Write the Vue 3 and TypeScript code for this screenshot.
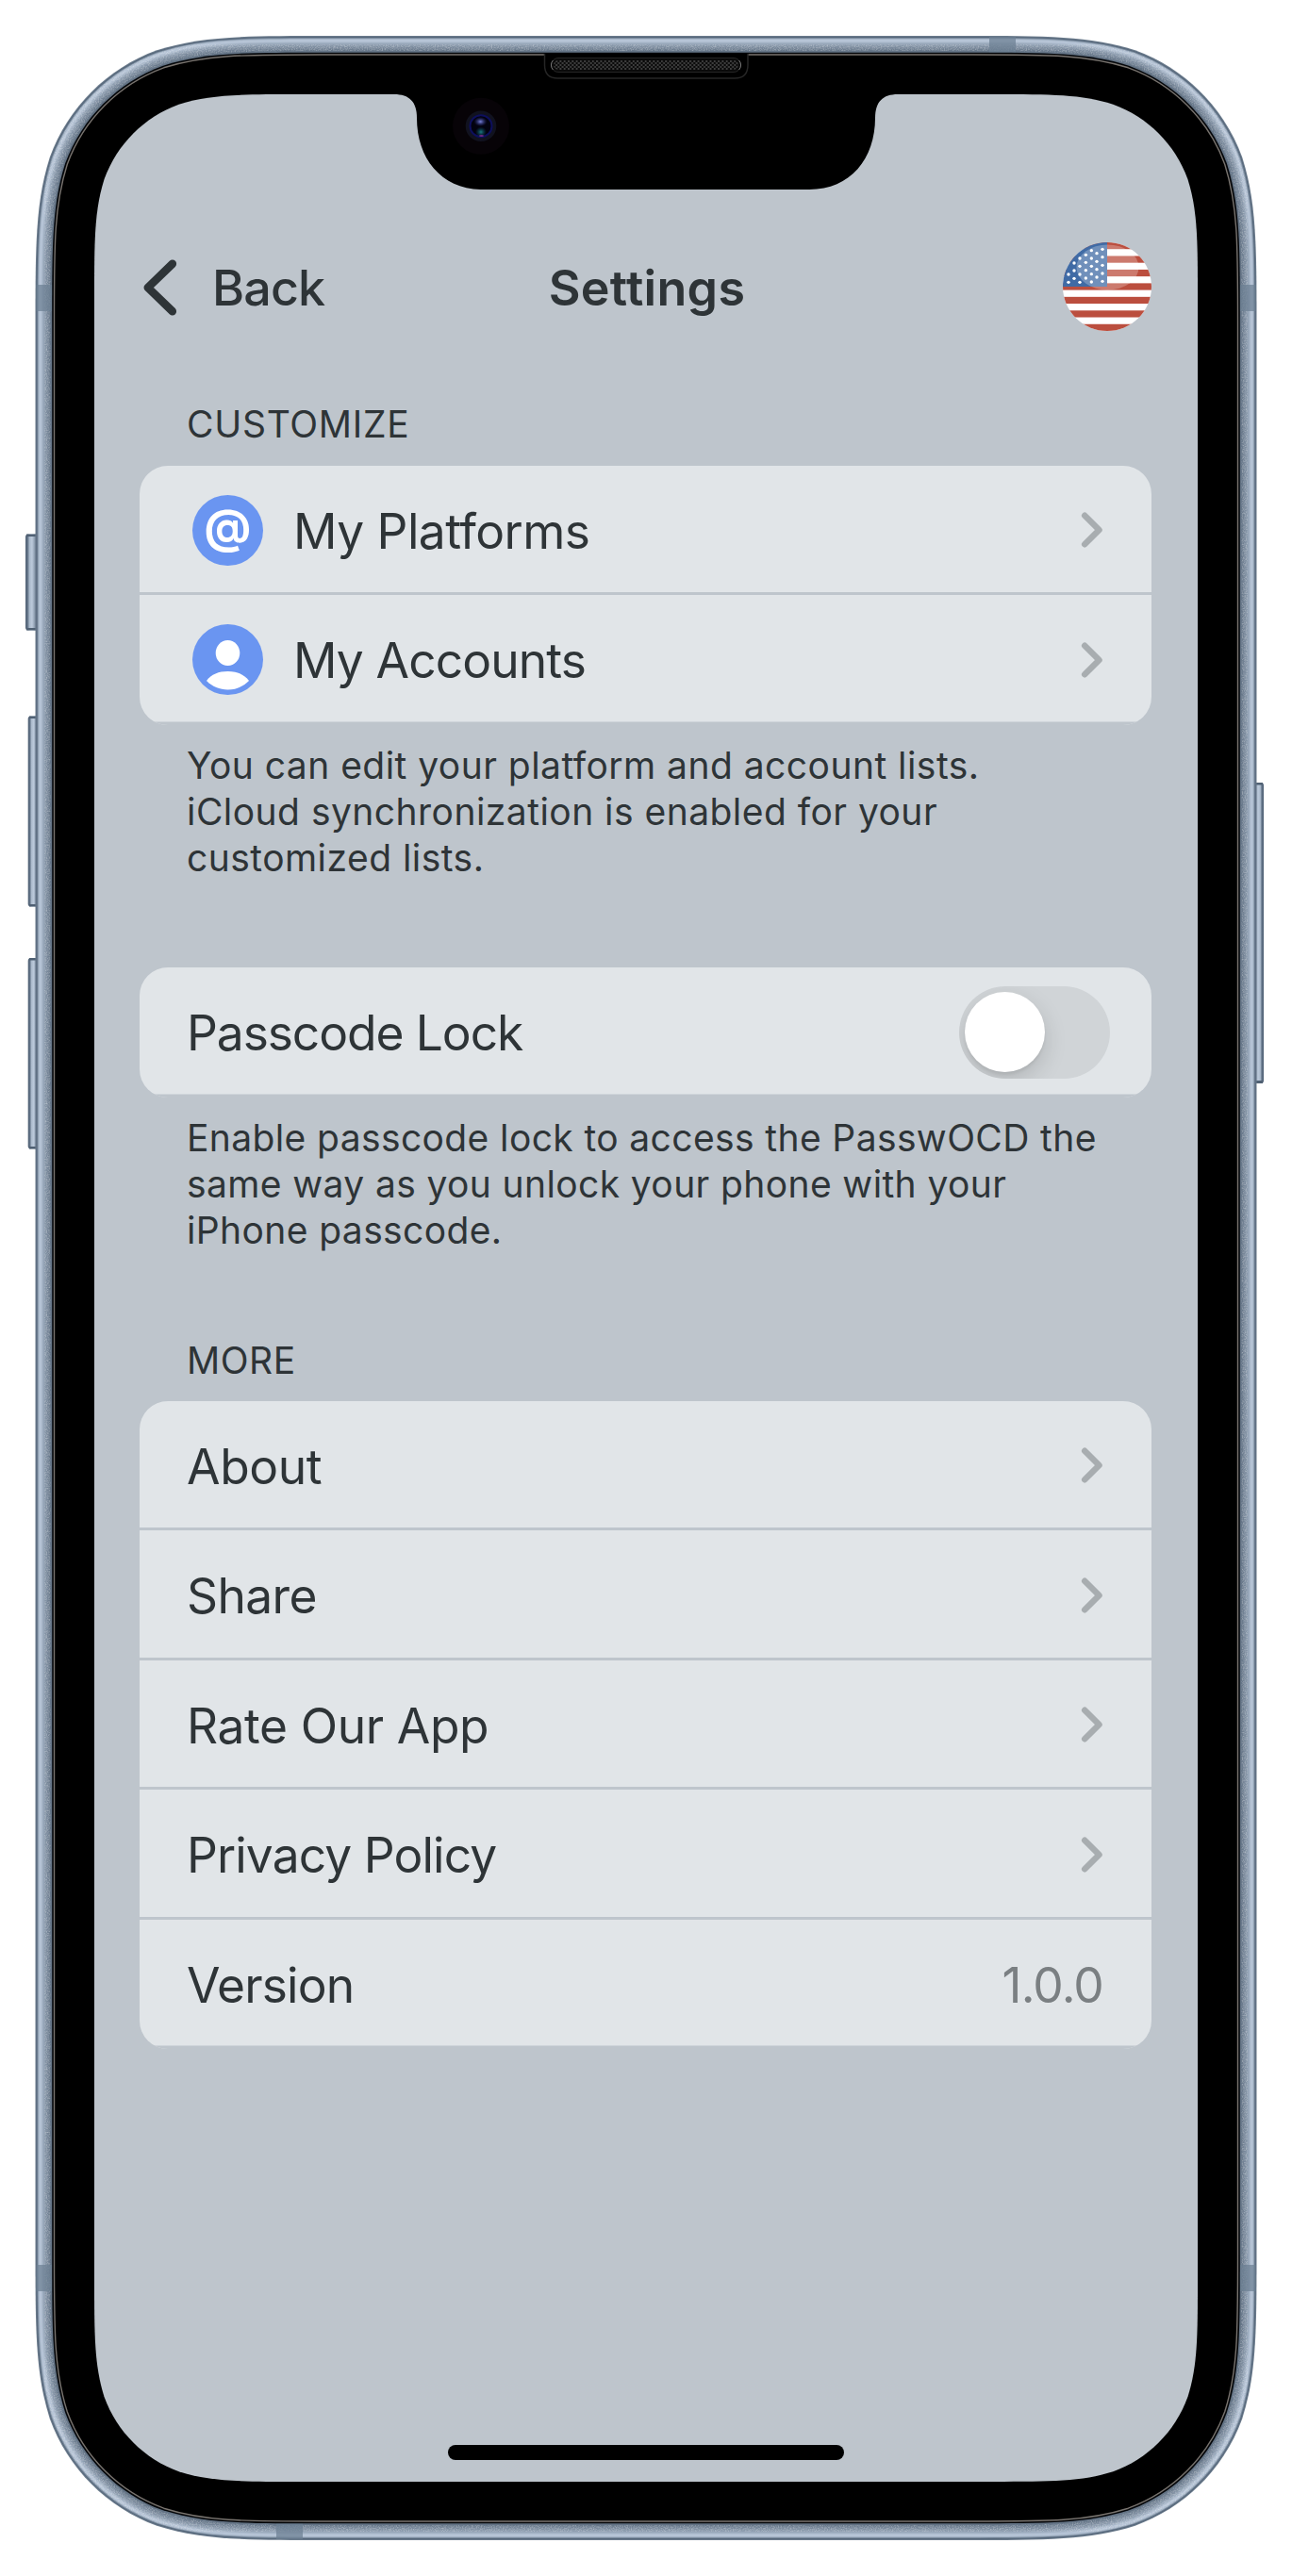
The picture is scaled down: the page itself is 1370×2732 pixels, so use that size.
<script setup lang="ts">
interface Row {
  label: string
  tracking: number
  icon?: 'at' | 'person'
  value?: string
}

const customize: Row[] = [
  { label: 'My Platforms', icon: 'at', tracking: -0.55 },
  { label: 'My Accounts', icon: 'person', tracking: -0.9 },
]
const more: Row[] = [
  { label: 'About', tracking: -0.4 },
  { label: 'Share', tracking: -0.6 },
  { label: 'Rate Our App', tracking: -0.4 },
  { label: 'Privacy Policy', tracking: -0.9 },
  { label: 'Version', value: '1.0.0', tracking: -0.85 },
]

/* Rounded rectangle with continuous-curvature corners. */
function squircle(x: number, y: number, w: number, h: number, r: number): string {
  const a = 1.528665 * r, b = 1.08849296 * r, c = 0.86840694 * r
  const d = 0.63149379 * r, e = 0.07491139 * r, f = 0.37282383 * r, g = 0.16905956 * r
  const X = x + w, Y = y + h
  return [
    `M${x + a} ${y}H${X - a}`,
    `C${X - b} ${y} ${X - c} ${y} ${X - d} ${y + e}`,
    `C${X - f} ${y + g} ${X - g} ${y + f} ${X - e} ${y + d}`,
    `C${X} ${y + c} ${X} ${y + b} ${X} ${y + a}V${Y - a}`,
    `C${X} ${Y - b} ${X} ${Y - c} ${X - e} ${Y - d}`,
    `C${X - g} ${Y - f} ${X - f} ${Y - g} ${X - d} ${Y - e}`,
    `C${X - c} ${Y} ${X - b} ${Y} ${X - a} ${Y}H${x + a}`,
    `C${x + b} ${Y} ${x + c} ${Y} ${x + d} ${Y - e}`,
    `C${x + f} ${Y - g} ${x + g} ${Y - f} ${x + e} ${Y - d}`,
    `C${x} ${Y - c} ${x} ${Y - b} ${x} ${Y - a}V${y + a}`,
    `C${x} ${y + b} ${x} ${y + c} ${x + e} ${y + d}`,
    `C${x + g} ${y + f} ${x + f} ${y + g} ${x + d} ${y + e}`,
    `C${x + c} ${y} ${x + b} ${y} ${x + a} ${y}Z`,
  ].join('')
}
const ring = (inset: number) =>
  squircle(37.5 + inset, 38 + inset, 1295 - 2 * inset, 2656 - 2 * inset, 204 - inset)

/* Brushed band, from its outer edge inwards. */
const metal: [number, string][] = [
  [0, '#6b7b8c'], [1, '#56677a'], [2, '#7b8c9f'], [3, '#a5b4c6'], [4, '#b5c3d5'],
  [5, '#b8c6d8'], [6, '#afbdcf'], [7, '#a3b2c4'], [8, '#98a8ba'], [9, '#8f9eb1'],
  [10, '#8797a9'], [11, '#8090a2'], [12, '#7a899c'], [13, '#748496'], [14, '#6e7e90'],
  [15, '#68788a'], [16, '#637385'],
]

const stars: [number, number][] = [
  [69, 138], [69, 163], [87, 102], [87, 126], [87, 151], [105, 87], [105, 112], [105, 138], [105, 163],
  [124, 76], [124, 100], [124, 125], [124, 150], [142, 62], [142, 87], [142, 112], [142, 137], [142, 162],
  [159, 71], [159, 97], [159, 122], [159, 147], [177, 58], [177, 83], [177, 109], [177, 135], [177, 160],
]
</script>

<template>
  <div class="device">
    <svg class="body" viewBox="0 0 1370 2732" width="1370" height="2732">
      <defs>
        <filter id="grain" x="0" y="0" width="100%" height="100%">
          <feTurbulence type="fractalNoise" baseFrequency="0.75" numOctaves="2" seed="4" />
          <feColorMatrix values="0 0 0 0 1  0 0 0 0 1  0 0 0 0 1  1.6 0 0 0 -0.6" />
          <feComposite in2="SourceGraphic" operator="in" />
        </filter>
        <linearGradient id="btn"><stop offset="0" stop-color="#536477" /><stop offset=".16" stop-color="#5f7084" /><stop offset=".3" stop-color="#aab9cb" /><stop offset=".5" stop-color="#bccadb" /><stop offset=".72" stop-color="#8797aa" /><stop offset="1" stop-color="#5b6c7f" /></linearGradient>
        <pattern id="mesh" width="4.3" height="4" patternUnits="userSpaceOnUse"><rect width="2" height="2" fill="#3e3e3e" /><rect x="2.15" y="2" width="2" height="2" fill="#3e3e3e" /></pattern>
        <radialGradient id="hi"><stop offset="0" stop-color="#7a84dc" /><stop offset="1" stop-color="#2b2f8a" stop-opacity="0" /></radialGradient>
        <radialGradient id="lo"><stop offset="0" stop-color="#1a7a80" /><stop offset="1" stop-color="#0a3f5c" stop-opacity="0" /></radialGradient>
      </defs>

      <g fill="url(#btn)">
        <rect x="27" y="566.5" width="14" height="102" rx="3" />
        <rect x="29.7" y="759.5" width="12" height="202" rx="3" />
        <rect x="29.7" y="1016" width="12" height="202.5" rx="3" />
        <rect x="-1340" y="830" width="12" height="319" rx="3" transform="scale(-1 1)" />
      </g>
      <g fill="#4f6073">
        <rect x="28" y="566.5" width="10" height="2.5" /><rect x="28" y="666" width="10" height="2.5" />
        <rect x="31" y="759.5" width="7" height="2.5" /><rect x="31" y="959" width="7" height="2.5" />
        <rect x="31" y="1016" width="7" height="2.5" /><rect x="31" y="1216" width="7" height="2.5" />
        <rect x="1332" y="830" width="7" height="2.5" /><rect x="1332" y="1146" width="7" height="3" />
      </g>

      <path v-for="[i, c] in metal" :key="i" :d="ring(i)" :fill="c" />
      <path :d="ring(9.5)" fill="none" stroke="#fff" stroke-width="13" filter="url(#grain)" opacity=".42" />
      <g fill="#6c8093" fill-opacity=".72">
        <rect x="38.5" y="302" width="17" height="28" /><rect x="1314.5" y="302" width="17" height="28" />
        <rect x="38.5" y="2402" width="17" height="28" /><rect x="1314.5" y="2402" width="17" height="28" />
        <rect x="1049" y="39" width="28" height="17" /><rect x="293" y="2676" width="28" height="17" />
      </g>
      <path :d="ring(17.7)" fill="#05070a" />
      <path :d="ring(20)" fill="#000" stroke="#78736e" stroke-width="1.4" />
      <path :d="squircle(100, 100, 1170, 2532, 142)" fill="#bec5cc" />

      <path fill="#000" d="M418 99V100C434 100 442 108 442 125C442 168 468 201 512 201H858C902 201 928 168 928 125C928 108 936 100 952 100V99Z" />
      <path d="M577.5 57V69Q577.5 83 591.5 83H779Q793 83 793 69V57" fill="#000" stroke="#262626" stroke-width="1.5" />
      <rect x="584.5" y="61.5" width="201" height="15" rx="7.5" fill="#0a0a0a" stroke="#252525" />
      <rect x="587" y="64" width="196" height="10" rx="5" fill="url(#mesh)" />
      <path d="M586.5 64a7 7 0 0 0 0 10M783.5 64a7 7 0 0 1 0 10" fill="none" stroke="#777" stroke-width="1" />
      <circle cx="510" cy="133.7" r="30" fill="#070307" />
      <circle cx="510" cy="133.7" r="16.3" fill="#11121f" />
      <circle cx="510" cy="133.7" r="11.5" fill="#02020f" stroke="#0d0f5c" stroke-width="2" />
      <ellipse cx="509.5" cy="129" rx="7" ry="5" fill="url(#hi)" />
      <ellipse cx="510" cy="140" rx="6" ry="5.5" fill="url(#lo)" />
      <ellipse cx="510.5" cy="144" rx="2.4" ry="1.1" fill="#6c2880" />
    </svg>

    <main class="screen">
      <header class="bar">
        <button class="back">
          <svg width="36" height="60" viewBox="0 0 36 60"><path d="M30.8 4.8L4.8 30L30.8 55.2" fill="none" stroke="#2e3437" stroke-width="8.6" stroke-linecap="round" stroke-linejoin="round" /></svg>
          <span>Back</span>
        </button>
        <h1>Settings</h1>
        <svg class="flag" width="94" height="94" viewBox="0 0 94 94">
          <defs><clipPath id="disc"><circle cx="47" cy="47" r="47" /></clipPath></defs>
          <g clip-path="url(#disc)">
            <rect width="94" height="94" fill="#fff" />
            <rect v-for="n in 7" :key="n" x="0" :y="(n - 1) * 14.46" width="94" height="7.23" fill="#bb4e3e" />
            <rect width="47" height="47" fill="#406ba5" />
            <ellipse cx="47.5" cy="26.5" rx="33" ry="24" fill="#fff" fill-opacity=".25" />
            <circle v-for="([x, y], i) in stars" :key="'s' + i" :cx="(x - 51) / 3" :cy="(y - 36) / 3" r="1.7" fill="#fff" />
          </g>
        </svg>
      </header>

      <h2>CUSTOMIZE</h2>
      <section class="card">
        <div v-for="r in customize" :key="r.label" class="row">
          <span v-if="r.icon === 'at'" class="icon">@</span>
          <svg v-else class="icon" viewBox="0 0 75 75"><ellipse cx="37.5" cy="30.5" rx="12.8" ry="13.6" fill="#fff" /><path d="M15 60C20 53 28 50 37.5 50S55 53 60 60C54 66 46 69.5 37.5 69.5S21 66 15 60Z" fill="#fff" /></svg>
          <span class="label" :style="{ letterSpacing: r.tracking + 'px' }">{{ r.label }}</span>
          <svg class="chev" width="24" height="38" viewBox="0 0 24 38"><path d="M4.2 3.7L19.5 19L4.2 34.3" /></svg>
        </div>
      </section>
      <p>You can edit your platform and account lists.<br>iCloud synchronization is enabled for your<br>customized lists.</p>

      <section class="card lock">
        <div class="row">
          <span class="label">Passcode Lock</span>
          <span class="toggle"><i /></span>
        </div>
      </section>
      <p class="lock-note">Enable passcode lock to access the PasswOCD the<br>same way as you unlock your phone with your<br>iPhone passcode.</p>

      <h2 class="more">MORE</h2>
      <section class="card">
        <div v-for="r in more" :key="r.label" class="row">
          <span class="label" :style="{ letterSpacing: r.tracking + 'px' }">{{ r.label }}</span>
          <span v-if="r.value" class="value">{{ r.value }}</span>
          <svg v-else class="chev" width="24" height="38" viewBox="0 0 24 38"><path d="M4.2 3.7L19.5 19L4.2 34.3" /></svg>
        </div>
      </section>
      <div class="home" />
    </main>
  </div>
</template>

<style>
body { background: #fff; }
</style>

<style scoped>
.device {
  position: relative;
  width: 1370px;
  height: 2732px;
  overflow: hidden;
  box-sizing: border-box;
  padding: 100px;
  font-family: Inter, "Liberation Sans", sans-serif;
  color: #2e3437;
}
.body { position: absolute; left: 0; top: 0; display: block; }
.screen {
  position: relative;
  display: flex;
  flex-direction: column;
  box-sizing: border-box;
  width: 1170px;
  height: 2532px;
  padding: 155px 49px 23.5px 48px;
}
.bar {
  display: grid;
  grid-template-columns: 1fr auto 1fr;
  align-items: center;
  height: 98px;
  padding-left: 3px;
}
.back {
  display: flex;
  align-items: center;
  gap: 38px;
  border: 0;
  padding: 0;
  background: none;
  font: 500 52px/60px Inter, "Liberation Sans", sans-serif;
  letter-spacing: -0.9px;
  color: inherit;
  text-align: left;
}
.back svg { position: relative; top: 1px; left: 0.5px; }
.back span { padding-top: 3px; }
h1 { margin: 0; padding-top: 3px; font-size: 52px; line-height: 60px; font-weight: 600; letter-spacing: 0.3px; }
.flag { justify-self: end; display: block; }
h2 {
  margin: 73px 0 0;
  padding-left: 50px;
  font-size: 39px;
  line-height: 48px;
  height: 67.5px;
  font-weight: 400;
  letter-spacing: 0.7px;
}
.more { margin-top: 89.5px; line-height: 49px; letter-spacing: 0.5px; }
.card { border-radius: 30px; overflow: hidden; flex: none; }
.row {
  display: flex;
  align-items: center;
  box-sizing: border-box;
  height: 137.5px;
  padding: 0 51px 0 50px;
  background: #e1e5e8;
  box-shadow: inset 0 -3px #bec5cc;
  font-size: 51.5px;
  letter-spacing: -0.85px;
}
.row:last-child { box-shadow: inset 0 -3.5px #bec5cc; }
.lock .row { letter-spacing: -1.08px; }
.label { flex: 1; padding-top: 1px; }
.icon {
  width: 75px;
  height: 75px;
  margin: 0 32px 0 6px;
  border-radius: 50%;
  background: #6a95f1;
  color: #fff;
  text-align: center;
  letter-spacing: 0;
  font: 650 49px/68px Inter, "Liberation Sans", sans-serif;
}
.chev path { fill: none; stroke: #a8adb0; stroke-width: 6.5; stroke-linecap: round; stroke-linejoin: round; }
.value { padding-top: 1px; color: #7a7f82; }
.toggle {
  box-sizing: border-box;
  width: 160px;
  height: 97.5px;
  margin-right: -7px;
  padding: 6px;
  border-radius: 49px;
  background: #d0d4d7;
  overflow: hidden;
}
.toggle i {
  display: block;
  width: 85px;
  height: 85px;
  border-radius: 50%;
  background: #fff;
  box-shadow: 0 9px 24px rgba(0, 0, 0, .15), 0 3px 3px rgba(0, 0, 0, .06);
}
p {
  margin: 18px 0 0;
  padding-left: 50px;
  font-size: 39px;
  line-height: 49px;
  height: 147px;
  letter-spacing: 0.46px;
  white-space: nowrap;
}
.lock-note { letter-spacing: 0.38px; }
.lock { margin-top: 92.5px; }
.home {
  align-self: center;
  width: 420px;
  height: 15.5px;
  margin-top: auto;
  border-radius: 8px;
  background: #000;
}
</style>
